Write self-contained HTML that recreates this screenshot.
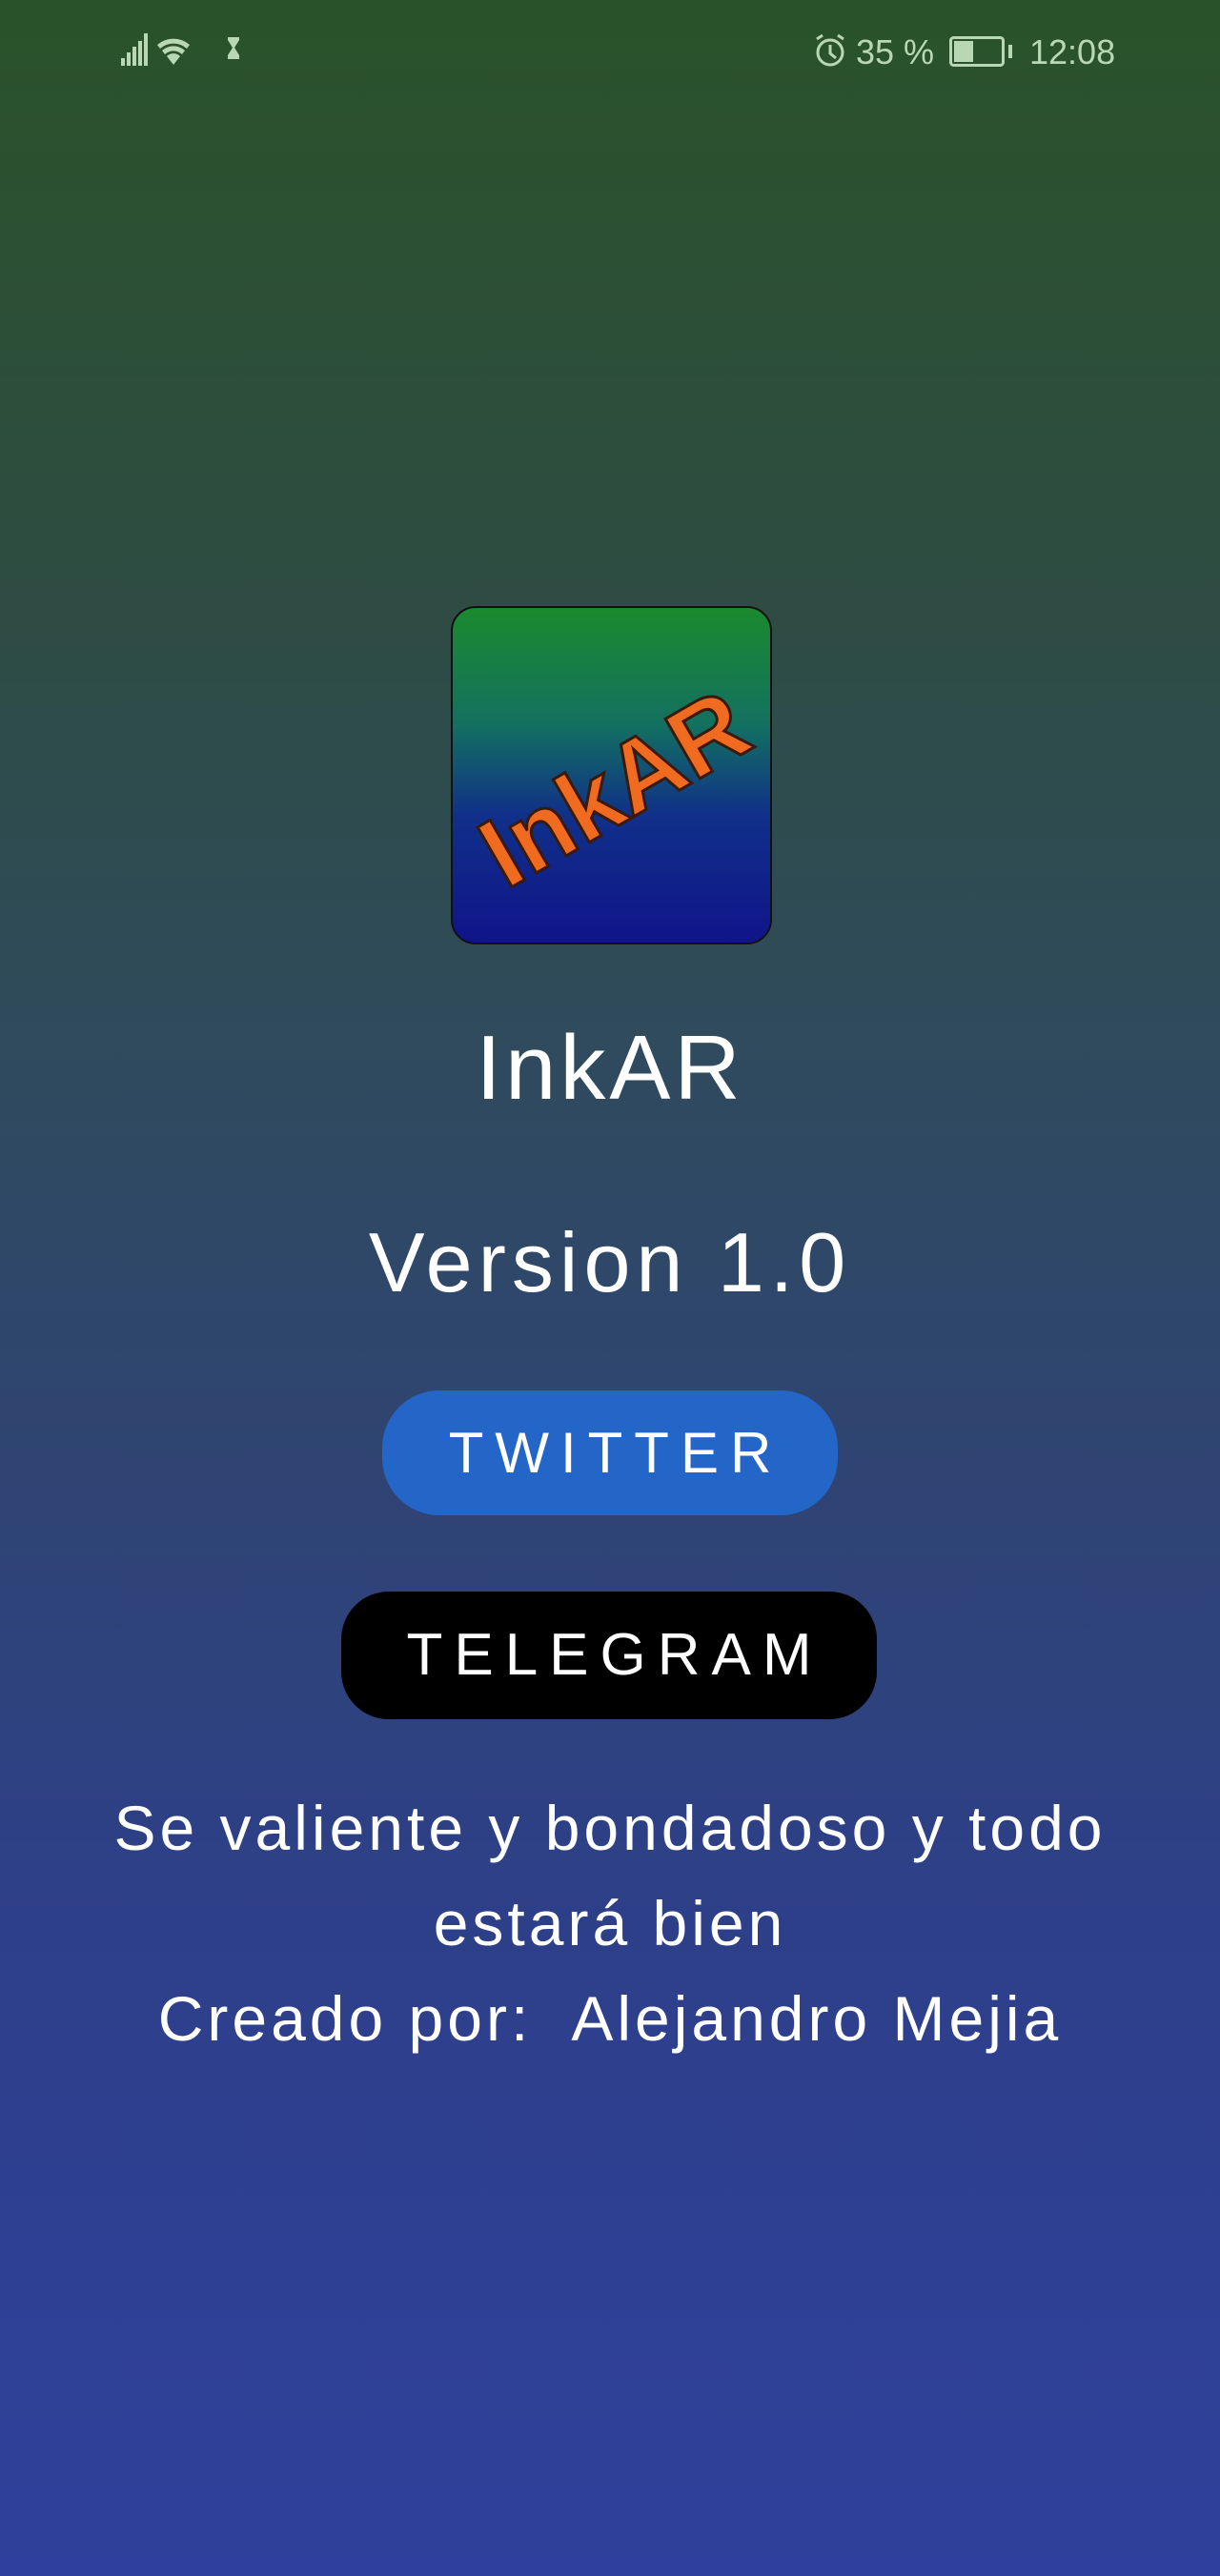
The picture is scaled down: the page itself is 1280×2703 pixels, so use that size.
<!DOCTYPE html>
<html><head><meta charset="utf-8"><style>
html,body{margin:0;padding:0}
body{width:1280px;height:2703px;position:relative;overflow:hidden;
background:linear-gradient(to bottom,#2a5229 0%,#2e4c45 25%,#2f4b5c 40%,#2f4570 55%,#2e3f8a 75%,#2f409c 100%);
font-family:"Comic Sans MS","Liberation Sans",sans-serif;color:#fff}
.a{position:absolute}
.c{position:absolute;left:0;width:1280px;text-align:center}
.sb{color:#b8d8b4;font-family:"Liberation Sans",sans-serif;font-size:36px;top:34px}
</style></head><body>
<svg class="a" style="left:125px;top:33px" width="130" height="40" viewBox="0 0 130 40" fill="#b8d8b4">
<rect x="2" y="28" width="4" height="8"/><rect x="8" y="22" width="4" height="14"/><rect x="14" y="16" width="4" height="20"/><rect x="20" y="10" width="4" height="26"/><rect x="26" y="2" width="4" height="34"/>
<path d="M40 14a26 26 0 0 1 34 0l-3 4a21 21 0 0 0-28 0zM45 20a18 18 0 0 1 24 0l-3 4a13 13 0 0 0-18 0zM50 26a10 10 0 0 1 14 0l-7 9z"/>
<path d="M114 6h12v3l-5 8 5 8v4h-12v-4l5-8-5-8z"/>
</svg>
<svg class="a" style="left:852px;top:34px" width="38" height="38" viewBox="0 0 38 38" fill="none" stroke="#b8d8b4" stroke-width="3"><circle cx="19" cy="21" r="13"/><path d="M19 13v9l6 5M5 7l6-4M33 7l-6-4"/></svg>
<div class="a sb" style="left:898px">35 %</div>
<svg class="a" style="left:996px;top:38px" width="70" height="32" viewBox="0 0 70 32"><rect x="1.5" y="1.5" width="55" height="29" rx="3" fill="none" stroke="#b8d8b4" stroke-width="3"/><rect x="5" y="5" width="20" height="22" fill="#b8d8b4"/><rect x="62" y="9" width="4" height="14" fill="#b8d8b4"/></svg>
<div class="a sb" style="left:1080px">12:08</div>

<div class="a" style="left:473px;top:636px;width:333px;height:351px;border:2px solid #111;border-radius:26px;background:linear-gradient(to bottom,#1a8a2e 0%,#137060 35%,#10308a 62%,#10148a 100%);overflow:hidden">
<div class="a" style="left:10px;top:130px;width:320px;text-align:center;transform:rotate(-30deg);font-size:105px;color:#f06a20;-webkit-text-stroke:3px #3a1a0a;font-weight:bold">InkAR</div>
</div>

<div class="c" style="top:1066px;font-size:96px;letter-spacing:4px">InkAR</div>
<div class="c" style="top:1274px;font-size:88px;letter-spacing:6px">Version 1.0</div>

<div class="a" style="left:401px;top:1459px;width:478px;height:131px;border-radius:60px;background:#2466c8;text-align:center;line-height:131px;font-size:60px;letter-spacing:12px;text-indent:12px">TWITTER</div>
<div class="a" style="left:358px;top:1670px;width:562px;height:134px;border-radius:50px;background:#000;text-align:center;line-height:134px;font-size:62px;letter-spacing:12px;text-indent:12px">TELEGRAM</div>

<div class="c" style="top:1868px;font-size:66px;line-height:100px;letter-spacing:4px">Se valiente y bondadoso y todo<br>estará bien<br>Creado por:&nbsp; Alejandro Mejia</div>
</body></html>
